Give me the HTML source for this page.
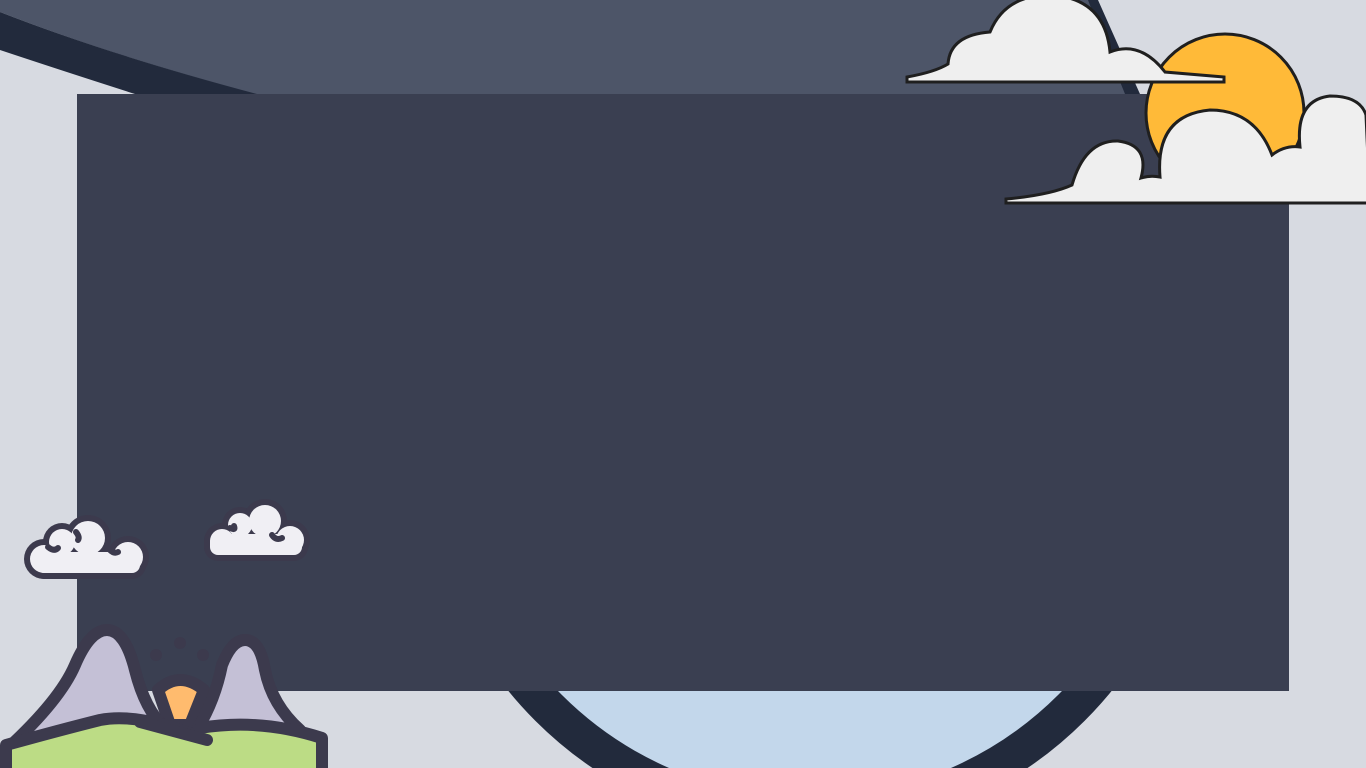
<!DOCTYPE html>
<html><head><meta charset="utf-8"><style>
html,body{margin:0;padding:0;width:1366px;height:768px;overflow:hidden;background:#d7dae1}
svg{position:absolute;left:0;top:0;display:block}
</style></head><body>
<svg width="1366" height="768" viewBox="0 0 1366 768">
<!-- bottom circle -->
<circle cx="810" cy="446" r="370" fill="#c3d7eb" stroke="#222a3c" stroke-width="37"/>
<!-- top slate band -->
<path d="M0,0 L1095,0 Q1112,40 1135,94 L255,94 Q110,55 0,12 Z" fill="#4d5568"/>
<path d="M0,12 Q110,55 257,94 L135,94 Q60,70 0,50 Z" fill="#222a3c"/>
<path d="M1088,0 L1098,0 Q1118,45 1140,94 L1125,94 Q1105,45 1088,0 Z" fill="#222a3c"/>
<!-- main rect -->
<rect x="77" y="94" width="1212" height="597" fill="#3a3f51"/>
<!-- sun -->
<circle cx="1225" cy="113" r="79" fill="#ffba38" stroke="#1f1f1f" stroke-width="3"/>
<!-- cloud 1 -->
<path d="M907,80 L907,77 Q935,72 948,64 Q950,35 990,32 Q1005,-5 1050,-5 Q1105,-2 1110,52 Q1140,40 1165,72 L1224,77 L1224,82 L907,82 Z" fill="#efefef" stroke="#1f1f1f" stroke-width="3"/>
<!-- cloud 2 -->
<path d="M1006,202 L1006,199 Q1050,195 1072,185 Q1085,140 1118,141 Q1150,145 1141,178 Q1150,175 1160,177 Q1155,115 1210,110 Q1255,110 1272,155 Q1285,145 1300,147 Q1295,100 1330,96 Q1360,96 1366,115 L1370,203 L1006,203 Z" fill="#efefef" stroke="#1f1f1f" stroke-width="3"/>
<!-- bottom-left icon clouds -->
<g fill="#3c3a4d">
  <circle cx="44" cy="559" r="20"/><circle cx="62" cy="542" r="19"/><circle cx="88" cy="538" r="23"/><circle cx="128" cy="557" r="21"/>
  <rect x="30" y="546" width="116" height="33" rx="14"/>
  <circle cx="222" cy="541" r="18"/><circle cx="240" cy="525" r="18"/><circle cx="265" cy="521" r="22"/><circle cx="290" cy="540" r="20"/>
  <rect x="204" y="528" width="104" height="33" rx="14"/>
</g>
<g fill="#f0eff4">
  <circle cx="44" cy="559" r="14"/><circle cx="62" cy="542" r="13"/><circle cx="88" cy="538" r="17"/><circle cx="128" cy="557" r="15"/>
  <rect x="36" y="552" width="104" height="21" rx="8"/>
  <circle cx="222" cy="541" r="12"/><circle cx="240" cy="525" r="12"/><circle cx="265" cy="521" r="16"/><circle cx="290" cy="540" r="14"/>
  <rect x="210" y="534" width="92" height="21" rx="8"/>
</g>
<g fill="none" stroke="#3c3a4d" stroke-width="6" stroke-linecap="round">
  <path d="M48,547 Q54,552 58,548"/><path d="M76,532 Q80,537 78,540"/><path d="M110,550 Q114,554 118,552"/>
  <path d="M230,528 Q236,531 234,526"/><path d="M272,535 Q276,541 282,538"/>
</g>
<g fill="#3c3a4d"><circle cx="156" cy="655" r="6"/><circle cx="180" cy="643" r="6"/><circle cx="203" cy="655" r="6"/></g>
<g stroke="#3c3a4d" stroke-width="12" stroke-linejoin="round" stroke-linecap="round">
  <path d="M158,690 Q180,670 204,690 L190,725 L170,725 Z" fill="#ffbb6e"/>
  <path d="M8,748 Q60,700 75,665 Q90,630 107,630 Q125,630 135,670 Q145,710 165,728 L8,750 Z" fill="#c4c0d6"/>
  <path d="M198,728 Q215,700 222,665 Q232,640 245,640 Q260,640 265,670 Q272,705 300,730 Z" fill="#c4c0d6"/>
  <path d="M6,785 L6,745 Q60,730 100,720 Q140,712 207,740 L207,785 Z" fill="#bcdc85"/>
  <path d="M200,728 Q260,718 322,738 L322,785 L200,785 Z" fill="#bcdc85" stroke="none"/>
  <path d="M200,728 Q260,718 322,738 L322,785" fill="none"/>
  <path d="M140,722 L207,740" fill="none"/>
</g>
</svg>
</body></html>
